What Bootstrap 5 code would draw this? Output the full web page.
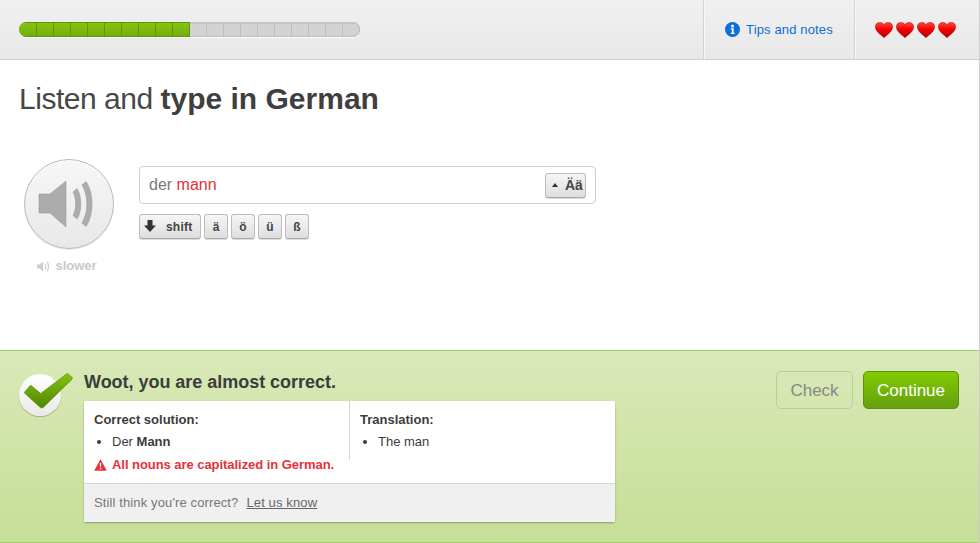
<!DOCTYPE html>
<html lang="en">
<head>
<meta charset="utf-8">
<title>Listen and type in German</title>
<link rel="stylesheet" href="https://cdn.jsdelivr.net/npm/bootstrap@5.3.0/dist/css/bootstrap.min.css">
<style>
html,body{height:543px;overflow:hidden}
body{font-family:"Liberation Sans",Arial,sans-serif;color:#3c3c3c;background:#fff}
.shell{height:543px;border-right:1px solid #ccc}
.topbar{height:60px;flex:none;background:linear-gradient(#f0f0f0,#e8e8e8);border-bottom:1px solid #cfcfcf}
.prog{width:341px;height:15px;margin-left:19px;padding-left:1px;border-radius:8px;overflow:hidden;background:#d3d3d3;box-shadow:inset 0 0 0 1px #bdbdbd,0 1px 0 #fff}
.seg{width:17px;height:15px;flex:none;border-right:1px solid #bebebe;box-shadow:inset 0 2px 0 #c4c4c4}
.seg.on{background:linear-gradient(#86c314,#72ae0a);border-right-color:#5e9604;border-top:1px solid #5e9604;border-bottom:1px solid #5e9604;box-shadow:none}
.seg.first{margin-left:-1px;width:18px}
.topcell{height:59px;border-left:1px solid #d2d2d2;box-shadow:inset 1px 0 0 #f8f8f8}
.tips{width:151px;color:#0b6fd8;font-size:13px;letter-spacing:.14px;gap:6px}
.hearts{width:125px;gap:3px;padding-left:20px}
.mainarea{flex:1 1 auto;min-height:0;padding:22px 19px 0}
.heading{font-size:30px;line-height:34px;font-weight:400;letter-spacing:-.48px;color:#474747;margin:0}
.heading b{font-weight:700;letter-spacing:0;color:#3f3f3f}
.exercise{margin-top:50px;margin-left:5px;gap:25px}
.speakcol{width:90px;margin-top:-7px}
.speak{width:90px;height:90px;border-radius:50%;background:linear-gradient(#f7f7f7,#e8e8e8);border:1px solid #b9b9b9;box-shadow:inset 0 1px 0 #fff,0 1px 1px rgba(0,0,0,.08)}
.speakicon{margin-right:4px}
.slower{margin-top:9px;font-size:13px;font-weight:700;color:#c8c8c8;gap:5px;line-height:16px;margin-right:4px}
.answer{width:457px;height:38px;border:1px solid #cfcfcf;border-radius:4px;padding:0 9px;font-size:16px;color:#7a7a7a}
.answer em{font-style:normal;color:#e0303a}
.keybtn{display:inline-flex;align-items:center;justify-content:center;height:25px;padding:0;font-size:12px;font-weight:700;color:#444;background:linear-gradient(#f6f6f6,#dedede);border:1px solid #bdbdbd;border-bottom-color:#a8a8a8;border-radius:3px;box-shadow:0 1px 0 #ddd}
.keyrow{margin-top:10px;gap:3px}
.k1{width:24px}.kshift{width:62px;gap:10px;justify-content:flex-start;padding-left:4px;letter-spacing:.2px}
.kcase{width:41px;gap:7px;font-size:14px;justify-content:flex-start;padding-left:6px}
.feedback{height:193px;flex:none;background:linear-gradient(#dae9b9,#c6de96);border-top:1px solid #a6cc70;border-bottom:1px solid #a6cc70;padding:20px 20px 0 19px}
.checkwrap{position:relative;width:65px;flex:none;height:60px}
.checkcircle{position:absolute;left:0;top:3px;width:42px;height:42px;border-radius:50%;background:linear-gradient(#fff,#e9e9e9);box-shadow:0 1px 1px rgba(0,0,0,.25)}
.checkmark{position:absolute;left:5px;top:2px}
.fbtitle{font-size:18px;font-weight:700;line-height:22px;letter-spacing:-.03px;color:#3c3c3c;margin:0 0 8px}
.sheet{width:531px;border:0;border-radius:2px;box-shadow:0 1px 2px rgba(0,0,0,.3);font-size:13px;color:#3c3c3c}
.leftcol{width:266px;height:59px;border-right:1px solid #d6d6d6;padding:11px 10px 0;flex:none;white-space:nowrap}
.rightcol{padding:11px 10px 0}
.sheet h6{font-size:13px;font-weight:700;line-height:16px;margin:0 0 6px}
.sheet ul{margin:0;padding-left:18px;line-height:16px;font-size:13px}
.warn{color:#e8303a;font-weight:700;gap:5px;line-height:16px;margin-top:-3px;margin-left:10px;letter-spacing:-.05px}
.sheetbody{height:82px;background:#fff;border-radius:2px 2px 0 0}
.sheetfoot{height:39px;background:#f0f0f0;border-top:1px solid #d6d6d6;color:#777;padding:0 10px;gap:8px;border-radius:0;letter-spacing:.12px}
.sheetfoot a{color:#666}
.actbtn{height:38px;font-size:17px;padding:0;line-height:1;border-radius:5px}
.btn-check-off{width:77px;background:transparent;color:#888;border:1px solid #b9cf95}
.btn-go{width:96px;color:#fff;background:linear-gradient(#82cb00,#659f10);border:1px solid #5b920a}
.actions{gap:10px}
</style>
</head>
<body>
<div class="shell d-flex flex-column">
  <header class="topbar d-flex align-items-center">
    <div class="prog d-flex">
      <span class="seg on first"></span><span class="seg on"></span><span class="seg on"></span><span class="seg on"></span><span class="seg on"></span><span class="seg on"></span><span class="seg on"></span><span class="seg on"></span><span class="seg on"></span><span class="seg on"></span>
      <span class="seg"></span><span class="seg"></span><span class="seg"></span><span class="seg"></span><span class="seg"></span><span class="seg"></span><span class="seg"></span><span class="seg"></span><span class="seg"></span><span class="seg"></span>
    </div>
    <div class="ms-auto d-flex">
      <div class="topcell tips d-flex align-items-center justify-content-center">
        <svg width="15" height="15" viewBox="0 0 15 15"><circle cx="7.5" cy="7.5" r="7.5" fill="#0b6fd8"/><circle cx="7.5" cy="4" r="1.5" fill="#fff"/><path d="M5.8 6.3h2.9v4.5h1v1.2H5.8v-1.2h1V7.5h-1z" fill="#fff"/></svg>
        <span>Tips and notes</span>
      </div>
      <div class="topcell hearts d-flex align-items-center justify-content-start">
        <svg width="18" height="16" viewBox="0 0 18 16"><defs><linearGradient id="hg" x1="0" y1="0" x2="0" y2="1"><stop offset="0" stop-color="#ff4a3a"/><stop offset=".45" stop-color="#f40000"/><stop offset="1" stop-color="#b00000"/></linearGradient></defs><path d="M9 15.700C6.500 13 .4 9.800.4 4.700.4 2 2.300.5 4.800.5 6.700.5 8.200 1.300 9 2.500 9.800 1.300 11.300.5 13.200.5c2.500 0 4.400 1.500 4.400 4.200 0 5.100-6.100 8.300-8.600 11z" fill="url(#hg)" stroke="#a80000" stroke-width=".5"/></svg>
        <svg width="18" height="16" viewBox="0 0 18 16"><path d="M9 15.700C6.500 13 .4 9.800.4 4.700.4 2 2.300.5 4.800.5 6.700.5 8.200 1.300 9 2.500 9.800 1.300 11.300.5 13.200.5c2.500 0 4.400 1.500 4.400 4.200 0 5.100-6.100 8.300-8.600 11z" fill="url(#hg)" stroke="#a80000" stroke-width=".5"/></svg>
        <svg width="18" height="16" viewBox="0 0 18 16"><path d="M9 15.700C6.500 13 .4 9.800.4 4.700.4 2 2.300.5 4.800.5 6.700.5 8.200 1.300 9 2.500 9.800 1.300 11.300.5 13.200.5c2.500 0 4.400 1.500 4.400 4.200 0 5.100-6.100 8.300-8.600 11z" fill="url(#hg)" stroke="#a80000" stroke-width=".5"/></svg>
        <svg width="18" height="16" viewBox="0 0 18 16"><path d="M9 15.700C6.500 13 .4 9.800.4 4.700.4 2 2.300.5 4.800.5 6.700.5 8.200 1.300 9 2.500 9.800 1.300 11.300.5 13.200.5c2.500 0 4.400 1.500 4.400 4.200 0 5.100-6.100 8.300-8.600 11z" fill="url(#hg)" stroke="#a80000" stroke-width=".5"/></svg>
      </div>
    </div>
  </header>

  <main class="mainarea">
    <h1 class="heading">Listen and <b>type in German</b></h1>
    <div class="exercise d-flex align-items-start">
      <div class="speakcol d-flex flex-column align-items-center">
        <div class="speak d-flex align-items-center justify-content-center">
          <svg class="speakicon" width="58" height="50" viewBox="0 0 58 50"><g fill="#acacac" stroke="#9c9c9c" stroke-width=".6" stroke-linejoin="round"><path d="M1 15h11L28 2v46L12 34H1z"/><path d="M35 13l4-3.500c5 7.500 5 23 0 30.500l-4-3.500c3.500-6 3.500-17.500 0-23.500z"/><path d="M44 6l4-3.500c8 11.500 8 33.500 0 45L44 44c6.500-10.500 6.500-27.500 0-38z"/></g></svg>
        </div>
        <div class="slower d-flex align-items-center">
          <svg width="13" height="11" viewBox="0 0 13 11"><g fill="#cfcfcf"><path d="M0 3.500h2.500L6 .5v10L2.500 7.500H0z"/><path d="M7.500 3l1-.8c1 2 1 4.600 0 6.600l-1-.8c.7-1.500.7-3.500 0-5z"/><path d="M9.800 1.300l1-.8c1.800 3 1.800 7 0 10l-1-.8c1.400-2.500 1.400-5.900 0-8.400z"/></g></svg>
          <span>slower</span>
        </div>
      </div>
      <div>
        <div class="answer d-flex align-items-center">
          <span>der <em>mann</em></span>
          <button type="button" class="btn keybtn kcase ms-auto"><svg width="6" height="4" viewBox="0 0 6 4"><path d="M3 0l3 4H0z" fill="#333"/></svg><span>Ää</span></button>
        </div>
        <div class="keyrow d-flex">
          <button type="button" class="btn keybtn kshift"><svg width="12" height="13" viewBox="0 0 12 13"><path d="M3.500 0h5v5.500H12L6 12 0 5.500h3.500z" fill="#333"/></svg><span>shift</span></button>
          <button type="button" class="btn keybtn k1">ä</button>
          <button type="button" class="btn keybtn k1">ö</button>
          <button type="button" class="btn keybtn k1">ü</button>
          <button type="button" class="btn keybtn k1">ß</button>
        </div>
      </div>
    </div>
  </main>

  <footer class="feedback d-flex align-items-start">
    <div class="checkwrap">
      <div class="checkcircle"></div>
      <svg class="checkmark" width="49" height="36" viewBox="0 0 49 36"><defs><linearGradient id="cg" x1="0" y1="0" x2="0" y2="1"><stop offset="0" stop-color="#86c20c"/><stop offset="1" stop-color="#4f8606"/></linearGradient></defs><path d="M.7 19L6 12.800c.5-.5 1-.5 1.500 0l9.200 7.700L42.500 1c.7-.6 1.300-.6 1.800 0l3.800 3.400c.6.600.6 1.200 0 1.800L19.500 34.200c-1 1-2.500 1-3.500 0L.7 20.300c-.3-.4-.3-.9 0-1.300z" fill="url(#cg)" stroke="#5c9407" stroke-width=".7" stroke-linejoin="round"/></svg>
    </div>
    <div>
      <h2 class="fbtitle">Woot, you are almost correct.</h2>
      <div class="card sheet">
        <div class="sheetbody">
          <div class="d-flex">
            <div class="leftcol">
              <h6>Correct solution:</h6>
              <ul><li>Der <b>Mann</b></li></ul>
            </div>
            <div class="rightcol">
              <h6>Translation:</h6>
              <ul><li>The man</li></ul>
            </div>
          </div>
          <div class="warn d-flex align-items-center">
            <svg width="13" height="12" viewBox="0 0 13 12"><path d="M6.500.3l6.300 11.400H.2z" fill="#e8303a"/><path d="M5.800 4h1.400l-.2 4H6zM5.800 8.800h1.400v1.400H5.800z" fill="#fff"/></svg>
            <span>All nouns are capitalized in German.</span>
          </div>
        </div>
        <div class="sheetfoot d-flex align-items-center">
          <span>Still think you're correct?</span>
          <a href="#">Let us know</a>
        </div>
      </div>
    </div>
    <div class="actions ms-auto d-flex">
      <button type="button" class="btn actbtn btn-check-off">Check</button>
      <button type="button" class="btn actbtn btn-go">Continue</button>
    </div>
  </footer>
</div>
</body>
</html>
